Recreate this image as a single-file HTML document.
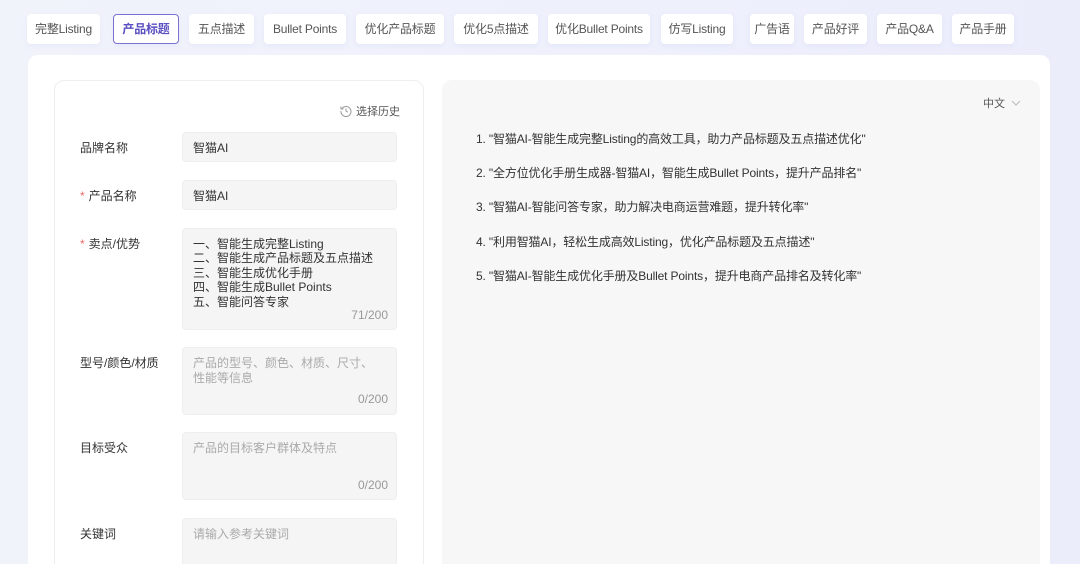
<!DOCTYPE html>
<html><head><meta charset="utf-8"><style>
*{box-sizing:border-box;margin:0;padding:0}
html{width:1080px;height:564px;overflow:hidden}
body{width:1080px;height:564px;overflow:hidden;background:linear-gradient(90deg,#f1f3fb,#eef0fc 60%,#ecedfb);font-family:"Liberation Sans","Noto Sans CJK SC",sans-serif;color:#333;position:relative}
.tab{position:absolute;top:14px;height:30px;background:#fff;border-radius:4px;font-size:12px;color:#555;line-height:30px;text-align:center;box-shadow:0 2px 6px rgba(120,130,220,.08);white-space:nowrap;letter-spacing:-0.2px}
.tab.on{border:1px solid #7b72d0;color:#5a4fc0;font-weight:bold;line-height:28px}
.card{position:absolute;left:28px;top:55px;width:1022px;height:520px;background:#fff;border-radius:10px}
.left{position:absolute;left:54px;top:80px;width:370px;height:500px;border:1px solid #eee;border-radius:10px;background:#fff}
.right{position:absolute;left:442px;top:80px;width:598px;height:500px;background:#f7f7f7;border-radius:10px}
.lbl{position:absolute;left:80px;font-size:12px;color:#333}
.lbl i{color:#e66;font-style:normal;margin-right:4px}
.inp{position:absolute;left:182px;width:215px;background:#f5f5f5;border-radius:4px;border:1px solid #eee;font-size:12px;color:#333;padding:8px 10px;line-height:14px}
.ph{color:#aaa}
.cnt{position:absolute;right:8px;bottom:7px;color:#999;font-size:12px}
.li{position:absolute;left:476px;font-size:12px;color:#333;letter-spacing:-0.15px}
</style></head><body>
<div class="tab" style="left:27px;width:73px">完整Listing</div>
<div class="tab on" style="left:113px;width:66px">产品标题</div>
<div class="tab" style="left:189px;width:65px">五点描述</div>
<div class="tab" style="left:264px;width:82px">Bullet Points</div>
<div class="tab" style="left:356px;width:88px">优化产品标题</div>
<div class="tab" style="left:454px;width:84px">优化5点描述</div>
<div class="tab" style="left:548px;width:102px">优化Bullet Points</div>
<div class="tab" style="left:661px;width:72px">仿写Listing</div>
<div class="tab" style="left:750px;width:44px">广告语</div>
<div class="tab" style="left:804px;width:63px">产品好评</div>
<div class="tab" style="left:877px;width:65px">产品Q&amp;A</div>
<div class="tab" style="left:952px;width:62px">产品手册</div>
<div class="card"></div>
<div class="left"></div>
<div class="right"></div>
<div style="position:absolute;left:340px;top:103px;font-size:11px;color:#555"><svg width="12" height="12" viewBox="0 0 12 12" style="vertical-align:-2px;margin-right:4px"><path d="M2 3.5A5 5 0 1 1 1 6" fill="none" stroke="#999" stroke-width="1"/><path d="M1 1.5v2.5h2.5" fill="none" stroke="#999"/><path d="M6 3.5V6l1.8 1.2" fill="none" stroke="#999"/></svg>选择历史</div>
<div class="lbl" style="top:139px">品牌名称</div>
<div class="inp" style="top:132px;height:30px">智猫AI</div>
<div class="lbl" style="top:187px"><i>*</i>产品名称</div>
<div class="inp" style="top:180px;height:30px">智猫AI</div>
<div class="lbl" style="top:235px"><i>*</i>卖点/优势</div>
<div class="inp" style="top:228px;height:102px;padding-top:8px;line-height:14.4px">一、智能生成完整Listing<br>二、智能生成产品标题及五点描述<br>三、智能生成优化手册<br>四、智能生成Bullet Points<br>五、智能问答专家<span class="cnt">71/200</span></div>
<div class="lbl" style="top:354px">型号/颜色/材质</div>
<div class="inp ph" style="top:347px;height:68px;padding-top:8px;line-height:15px">产品的型号、颜色、材质、尺寸、<br>性能等信息<span class="cnt">0/200</span></div>
<div class="lbl" style="top:439px">目标受众</div>
<div class="inp ph" style="top:432px;height:68px;padding-top:8px">产品的目标客户群体及特点<span class="cnt">0/200</span></div>
<div class="lbl" style="top:525px">关键词</div>
<div class="inp ph" style="top:518px;height:60px;padding-top:8px">请输入参考关键词</div>
<div style="position:absolute;left:983px;top:95px;font-size:11px;color:#555">中文 <svg width="10" height="8" viewBox="0 0 10 8" style="margin-left:3px"><path d="M1 2l4 4 4-4" fill="none" stroke="#bbb"/></svg></div>
<div class="li" style="top:130px">1. "智猫AI-智能生成完整Listing的高效工具，助力产品标题及五点描述优化"</div>
<div class="li" style="top:164px">2. "全方位优化手册生成器-智猫AI，智能生成Bullet Points，提升产品排名"</div>
<div class="li" style="top:198px">3. "智猫AI-智能问答专家，助力解决电商运营难题，提升转化率"</div>
<div class="li" style="top:233px">4. "利用智猫AI，轻松生成高效Listing，优化产品标题及五点描述"</div>
<div class="li" style="top:267px">5. "智猫AI-智能生成优化手册及Bullet Points，提升电商产品排名及转化率"</div>
</body></html>
